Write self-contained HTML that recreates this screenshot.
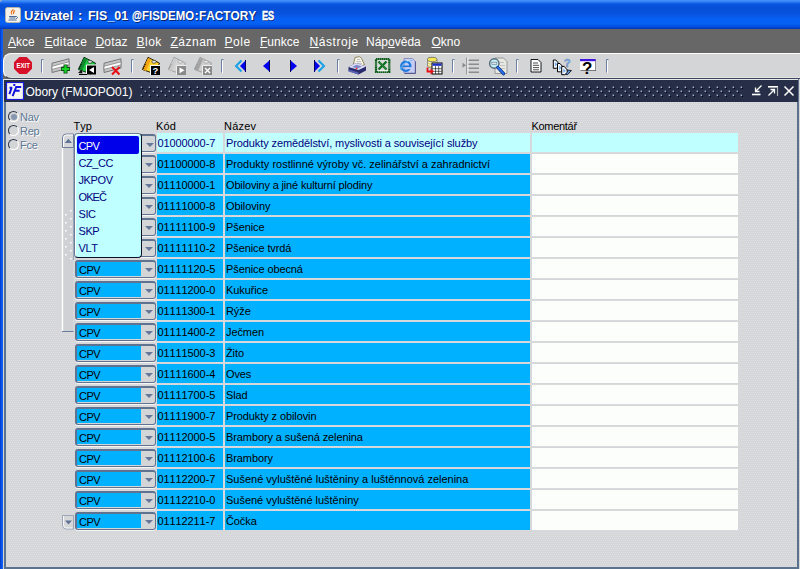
<!DOCTYPE html>
<html><head><meta charset="utf-8"><title>Obory</title>
<style>
*{box-sizing:border-box;margin:0;padding:0}
html,body{width:800px;height:569px;overflow:hidden}
body{font-family:"Liberation Sans",sans-serif;font-size:11px;font-kerning:none;background:#d5d6d8;position:relative;color:#000}
.abs{position:absolute}
#title{left:0;top:0;width:800px;height:29px;background:linear-gradient(#4a97f8 0,#2a7bf4 2px,#0a55e0 4px,#064fd6 8px,#0853de 14px,#0760f4 19px,#0660f4 24px,#034ad8 27px,#0238b4 29px)}
#title .txt{top:8px;transform-origin:0 0;color:#fff;font-weight:bold;font-size:13px;text-shadow:1px 1px 0 #0a246a;white-space:nowrap;line-height:16px}
#lborder{left:0;top:29px;width:3px;height:540px;background:linear-gradient(90deg,#0236c8,#0a56ea 50%,#1560f0)}
#menu{left:3px;top:29px;width:797px;height:24px;background:#676767;color:#fff;font-size:12px;white-space:nowrap}
#menu span{position:absolute;top:6px;line-height:14px}
#menu u{text-decoration:underline;text-underline-offset:1px}
#toolbg{left:3px;top:53px;width:797px;height:26px;background:#676767}
#tool{left:3px;top:53px;width:900px;height:26px;background:#d4d5d7;border-radius:8px 0 0 8px;border-top:1px solid #fff;border-left:1px solid #fff;border-bottom:1px solid #3c4660;box-shadow:inset 0 -1px 0 #e2e2e2}
#win{left:4px;top:79px;width:795px;height:490px;border:2px solid #5b728f;border-top:none;background-color:#d4d6d9}
#wtitle{left:4px;top:79px;width:794px;height:23px;background:#262f47;color:#fff;font-size:12px;border-top:1px solid #e8e8e8}
#wtitle .t{left:21.5px;top:5px;white-space:nowrap;line-height:14px;letter-spacing:-.03px}
.row{position:absolute;left:0;height:19px;width:800px}
.c{position:absolute;top:0;height:19px;background:#00b1ff;line-height:14px;padding:3px 0 0 1px;white-space:nowrap;overflow:hidden;letter-spacing:-.1px}
.first .c{background:#c0ffff;color:#000080}
.kod{left:157px;width:66px;padding-left:.5px}
.naz{left:225px;width:305px}
.kom{left:532px;width:206px;background:#fcfefc!important}
.first .kom{background:#c0ffff!important}
.combo{position:absolute;left:75px;top:1px;width:81px;height:18px;border:1px solid #5f7391;border-top-width:2px;border-left-width:2px;border-radius:3px;background:#d4d5d7;box-shadow:0 1px 0 #f6f6f6}
.combo span{position:absolute;left:0;top:0;width:64px;height:14px;background:#00b1ff;line-height:16px;padding-left:2px;letter-spacing:-.5px;overflow:hidden}
.combo i{position:absolute;left:67.5px;top:6px;border:4px solid transparent;border-top:4px solid #66789a;border-bottom:none}
.hdr{position:absolute;top:119px;font-size:11px;line-height:14px;letter-spacing:-.3px}
.radio{position:absolute;left:8px;width:11px;height:11px;border-radius:50%;border:1px solid #2c3548;border-right-color:#fff;border-bottom-color:#fff;background:#d4d5d7}
.radio b{position:absolute;left:2px;top:2px;width:6px;height:6px;border-radius:50%;background:#8797b0}
.rl{position:absolute;left:20px;color:#5d7896;text-shadow:1px 1px 0 #fff;line-height:14px;letter-spacing:-.25px}
.first .combo i{margin:1px 0 0 1px}
#pop{left:74px;top:133px;width:68px;height:125px;background:#c0ffff;border:1px solid #6a7c98;border-right:1px solid #0c1226;border-bottom:1px solid #0c1226;border-radius:4px;box-shadow:inset 1px 1px 0 #fff;color:#000080}
#pop div{position:absolute;left:2px;height:17px;width:62px;line-height:14px;padding:3px 0 0 1.5px;letter-spacing:-.4px}
#pop .sel{background:#0000ea;color:#fff;border-radius:2px;height:18px;top:2px;letter-spacing:-.7px}
</style></head><body>
<div id="title" class="abs">
<svg class="abs" style="left:5px;top:7px" width="16" height="16" viewBox="0 0 16 16"><rect x=".5" y=".5" width="15" height="15" rx="2" fill="#f4f2ea" stroke="#b8b4a8"/><path d="M8.5 2.5c-2 1.5-3 3-1.5 5M10 3.5c-1.5 1-2 2.2-1 3.5" stroke="#e8701a" stroke-width="1.2" fill="none"/><path d="M4 9.5h7M4.5 11h6M3.5 13h8" stroke="#4a6a9a" stroke-width="1"/><path d="M11 9.5c2 0 2 2 0 2" stroke="#4a6a9a" fill="none"/></svg>
<div class="txt abs" style="left:24px;transform:scaleX(1)">Uživatel</div><div class="txt abs" style="left:78px;transform:scaleX(1)">:</div><div class="txt abs" style="left:88px;transform:scaleX(0.96)">FIS_01</div><div class="txt abs" style="left:131.5px;transform:scaleX(0.78);-webkit-text-stroke:.3px #fff">@</div><div class="txt abs" style="left:141.5px;transform:scaleX(0.88)">FISDEMO</div><div class="txt abs" style="left:194.5px;transform:scaleX(1)">:</div><div class="txt abs" style="left:199px;transform:scaleX(0.91)">FACTORY</div><div class="txt abs" style="left:261.5px;transform:scaleX(0.7);-webkit-text-stroke:.5px #fff">ES</div></div>
<div id="lborder" class="abs"></div><div class="abs" style="left:0;top:0;width:2px;height:1px;background:#8ea8d4"></div><div class="abs" style="left:0;top:1px;width:1px;height:1px;background:#8ea8d4"></div>
<div id="menu" class="abs">
<span style="left:5px"><u>A</u>kce</span>
<span style="left:41.4px;letter-spacing:.4px"><u>E</u>ditace</span>
<span style="left:92.4px;letter-spacing:.2px"><u>D</u>otaz</span>
<span style="left:133.5px;letter-spacing:.5px"><u>B</u>lok</span>
<span style="left:167.5px;letter-spacing:.5px"><u>Z</u>áznam</span>
<span style="left:221.6px;letter-spacing:.5px"><u>P</u>ole</span>
<span style="left:257px"><u>F</u>unkce</span>
<span style="left:306.6px;letter-spacing:.55px"><u>N</u>ástroje</span>
<span style="left:363px">Náp<u>o</u>věda</span>
<span style="left:428.5px"><u>O</u>kno</span>
</div>
<div id="toolbg" class="abs"></div>
<div id="tool" class="abs"></div>
<svg class="abs" style="left:0;top:0" width="800" height="80" viewBox="0 0 800 80">
<polygon points="19.3,57 26.7,57 32,62.3 32,68.7 26.7,74 19.3,74 14,68.7 14,62.3" fill="#d70f28"/>
<text x="23.2" y="68" font-family="Liberation Sans" font-weight="bold" font-size="7.5" fill="#fff" text-anchor="middle" textLength="13.5" lengthAdjust="spacingAndGlyphs">EXIT</text>
<path d="M41.5 59.5v13M41.5 59.5h2" stroke="#6b80a4" fill="none"/><path d="M42.5 60.5v12.5" stroke="#fff" fill="none"/>
<path d="M131.5 59.5v13M131.5 59.5h2" stroke="#6b80a4" fill="none"/><path d="M132.5 60.5v12.5" stroke="#fff" fill="none"/>
<path d="M221.5 59.5v13M221.5 59.5h2" stroke="#6b80a4" fill="none"/><path d="M222.5 60.5v12.5" stroke="#fff" fill="none"/>
<path d="M337.5 59.5v13M337.5 59.5h2" stroke="#6b80a4" fill="none"/><path d="M338.5 60.5v12.5" stroke="#fff" fill="none"/>
<path d="M452.5 59.5v13M452.5 59.5h2" stroke="#6b80a4" fill="none"/><path d="M453.5 60.5v12.5" stroke="#fff" fill="none"/>
<path d="M516.5 59.5v13M516.5 59.5h2" stroke="#6b80a4" fill="none"/><path d="M517.5 60.5v12.5" stroke="#fff" fill="none"/>
<path d="M606.5 59.5v13M606.5 59.5h2" stroke="#6b80a4" fill="none"/><path d="M607.5 60.5v12.5" stroke="#fff" fill="none"/>
<polygon points="52,63.2 69,58.8 69,68 52,72.5" fill="#c6c6c6" stroke="#6e6e6e" stroke-width=".9"/><polygon points="52,66.3 69,61.8 69,64.9 52,69.4" fill="#fff" stroke="#777" stroke-width=".7"/>
<path d="M65.5 64.5v9M61 69h9" stroke="#0a4a10" stroke-width="4"/><path d="M65.5 65.2v7.6M61.7 69h7.6" stroke="#18d428" stroke-width="2.2"/>
<polygon points="84,57.3 95.5,63.2 91,74 78.5,69.5" fill="#22cc48" stroke="#06280c" stroke-width="1"/><polygon points="84,58 87,59.6 82,71 79,69.5" fill="#0e8a2c"/><path d="M81.2 64l-2.5 5.5" stroke="#06280c" stroke-width="1.6" stroke-dasharray="1 1"/><ellipse cx="90" cy="61.8" rx="2.2" ry="1.5" fill="#e4e4e4" stroke="#06280c" stroke-width=".6"/>
<path d="M78 73l3.5-3.5 1 4z" fill="#111"/>
<rect x="86.5" y="65" width="9.5" height="9.5" fill="#000" /><path d="M86.5 74.5v-9.5h9.5" stroke="#fff" fill="none"/><polygon points="89,70 94,67 94,73" fill="#fff"/><path d="M79 74.5h8" stroke="#000"/>
<polygon points="104,63.2 121,58.8 121,68 104,72.5" fill="#c6c6c6" stroke="#6e6e6e" stroke-width=".9"/><polygon points="104,66.3 121,61.8 121,64.9 104,69.4" fill="#fff" stroke="#777" stroke-width=".7"/>
<path d="M112 67l7.5 7.5M119.5 67l-7.5 7.5" stroke="#e80c14" stroke-width="2"/>
<polygon points="148,57.3 159.5,63.2 155,74 142.5,69.5" fill="#ffd632" stroke="#2a1c00" stroke-width="1"/><polygon points="148,58 151,59.6 146,71 143,69.5" fill="#f4a410"/><path d="M145.2 64l-2.5 5.5" stroke="#2a1c00" stroke-width="1.6" stroke-dasharray="1 1"/><ellipse cx="154" cy="61.8" rx="2.2" ry="1.5" fill="#e4e4e4" stroke="#2a1c00" stroke-width=".6"/>
<rect x="150.5" y="65.5" width="9.5" height="9.5" fill="#000"/><path d="M150.5 75v-9.5h9.5" stroke="#fff" fill="none"/><text x="155.5" y="74" font-family="Liberation Sans" font-weight="bold" font-size="9.5" fill="#fff" text-anchor="middle">?</text>
<polygon points="174,57.3 185.5,63.2 181,74 168.5,69.5" fill="#d6d6d6" stroke="#9a9a9a" stroke-width="0.9"/><polygon points="174,58 177,59.6 172,71 169,69.5" fill="#cccccc"/><path d="M171.2 64l-2.5 5.5" stroke="#9a9a9a" stroke-width="1.6" stroke-dasharray="1 1"/><ellipse cx="180" cy="61.8" rx="2.2" ry="1.5" fill="#e4e4e4" stroke="#9a9a9a" stroke-width=".6"/>
<rect x="176.5" y="65.5" width="9.5" height="9.5" fill="#8a8a8a"/><path d="M176.5 75v-9.5h9.5" stroke="#eee" fill="none"/><polygon points="179.5,67.5 184.5,70.3 179.5,73.2" fill="#fff"/>
<polygon points="200,57.3 211.5,63.2 207,74 194.5,69.5" fill="#cfcfcf" stroke="#969696" stroke-width="0.9"/><polygon points="200,58 203,59.6 198,71 195,69.5" fill="#a4a4a4"/><path d="M197.2 64l-2.5 5.5" stroke="#969696" stroke-width="1.6" stroke-dasharray="1 1"/><ellipse cx="206" cy="61.8" rx="2.2" ry="1.5" fill="#e4e4e4" stroke="#969696" stroke-width=".6"/>
<rect x="202.5" y="65.5" width="9.5" height="9.5" fill="#8a8a8a"/><path d="M202.5 75v-9.5h9.5" stroke="#eee" fill="none"/><path d="M205 68l5 5M210 68l-5 5" stroke="#fff" stroke-width="1.3"/>
<polygon points="246,60 246,72 240,66" fill="#0000f0"/><path d="M241.5 60.5l-5.5 5.5 5.5 5.5" stroke="#18a0e8" stroke-width="2" fill="none"/><path d="M245.5 60v12" stroke="#000060"/>
<polygon points="270,60 270,72 263,66" fill="#0000f0"/><path d="M269.5 60v12" stroke="#000060"/>
<polygon points="290,60 290,72 297,66" fill="#0000f0"/><path d="M290.5 60v12" stroke="#000060"/>
<polygon points="314,60 314,72 320,66" fill="#0000f0"/><path d="M318.5 60.5l5.5 5.5-5.5 5.5" stroke="#18a0e8" stroke-width="2" fill="none"/><path d="M314.5 60v12" stroke="#000060"/>
<path d="M353.5 64l1.5-6.5 4.5-.8 2 1.5 3 6.5-6 2z" fill="#f6f4e4" stroke="#7a7448" stroke-width=".8"/><path d="M357 59.5l3 .0M356.5 61.5l4.5 .3M357 63.3l5 .5" stroke="#a8a8b8" stroke-width=".7"/><polygon points="348.5,67 356,63 366,66.5 366,70.5 358.5,74.5 348.5,71" fill="#2a2c6c"/><polygon points="348.5,67 356,63 366,66.5 358.5,70" fill="#dcdff6"/><polygon points="352,67 356.5,64.8 362,66.5 357.8,68.5" fill="#8088c8"/><polygon points="348.5,69.5 358.5,72.5 358.5,74.5 348.5,71.5" fill="#5a64b4"/><circle cx="356.5" cy="68.6" r=".9" fill="#f02020"/>
<rect x="376" y="59" width="13.3" height="13" fill="#d8dad8" stroke="#0a5c18" stroke-width="2.2" stroke-dasharray="1.6 .35"/><path d="M377.5 70.8h10.5" stroke="#fff" stroke-width="1"/><path d="M378.5 61.5l8 8M386.5 61.5l-8 8" stroke="#0e6e20" stroke-width="2.3"/><path d="M379.5 62l6.5 7" stroke="#38a048" stroke-width=".8"/>
<polygon points="404,58.5 412.5,58.5 415.2,61 415.2,73 404,73" fill="#c6cdf2" stroke="#7a80b8" stroke-width=".8"/><path d="M404.5 73.5h11M415.5 61.5v12" stroke="#5a5a90" stroke-width="1"/><path d="M405 60.5h6" stroke="#f0f2ff" stroke-width="1.2"/><circle cx="405.8" cy="66.3" r="4.6" fill="none" stroke="#1c78e0" stroke-width="2.2"/><path d="M402 66.3h8" stroke="#1c78e0" stroke-width="1.6"/><path d="M408.2 68.2h4.5" stroke="#c6cdf2" stroke-width="2"/><path d="M400.2 70c1.5-5.5 7-9.5 12-9.5" stroke="#5cb8f4" stroke-width="1" fill="none"/>
<path d="M427.5 59.5v6.5c0 2.5 9.5 2.5 9.5 0v-6.5" fill="#f8f6d8" stroke="#666" stroke-width=".7"/><ellipse cx="432.2" cy="59.5" rx="4.7" ry="2.2" fill="#f4e650" stroke="#555" stroke-width=".7"/><path d="M428 62.5c0 2.2 8.5 2.2 8.5 0M428 65c0 2.2 8.5 2.2 8.5 0" stroke="#d4b420" fill="none" stroke-width=".9"/>
<rect x="432" y="63" width="10" height="11" fill="#fff" stroke="#000" stroke-width="1"/><rect x="432.5" y="63.5" width="9" height="2.3" fill="#1830c8"/><path d="M432.5 68.7h9M432.5 71.3h9M435.5 66v8M438.7 66v8" stroke="#000" stroke-width=".6"/><path d="M427.5 67.5v4h4" stroke="#e81018" stroke-width="1.8" fill="none"/><polygon points="430.5,68.5 434,71.5 430.5,74.5" fill="#e81018"/>
<path d="M467.8 57.5v17" stroke="#fff" stroke-width="1.2"/><path d="M466.7 57.5v17" stroke="#8e8e8e" stroke-width="1"/><path d="M468.5 60.3h10.5M468.5 64.3h10.5M468.5 68.3h10.5M468.5 72.3h10.5" stroke="#8c8c8c" stroke-width="1.5"/><polygon points="462.5,62.8 466,65.3 462.5,67.8" fill="#8a8a8a"/>
<polygon points="495,58 503.5,58 507,61.5 507,73.5 495,73.5" fill="#e8e8e2" stroke="#8e8e8e" stroke-width=".9"/><path d="M500 62.5h4M500 65.5h5M500 68.5h5" stroke="#b8b8b8" stroke-width=".8"/><circle cx="494.3" cy="63.5" r="4.7" fill="#bfeef4" stroke="#566878" stroke-width="1.4"/><rect x="491.8" y="62.2" width="5" height="2.3" fill="#dfe8ee" stroke="#6a7a8a" stroke-width=".6"/><path d="M497.8 67.5l5.8 6.2" stroke="#0c2a78" stroke-width="3.2" stroke-linecap="round"/><path d="M497.8 67.5l5.8 6.2" stroke="#2470ec" stroke-width="1.9" stroke-linecap="round"/>
<polygon points="531,59.5 538,59.5 541,62.5 541,72 531,72" fill="#fff" stroke="#000" stroke-width=".9"/><path d="M533 63h5M533 65.3h6M533 67.6h6M533 69.8h6" stroke="#222" stroke-width=".8"/>
<polygon points="562.5,73.5 567,70 571.5,70.5 567.5,74.7" fill="#5a94e0" stroke="#000" stroke-width=".8"/><polygon points="553.3,60 555.8,60 558.8,63.5 558.8,66 556.3,68.3 553.3,68.3" fill="#f4f8ff" stroke="#000" stroke-width="1"/><polygon points="554.9,62 557.5999999999999,64.3 554.9,66.6" fill="#7ab0ec"/><polygon points="557.5,63.5 560,63.5 563,67 563,69.5 560.5,71.8 557.5,71.8" fill="#f4f8ff" stroke="#000" stroke-width="1"/><polygon points="559.1,65.5 561.8,67.8 559.1,70.1" fill="#7ab0ec"/><polygon points="561.7,66.4 564.2,66.4 567.2,69.9 567.2,72.4 564.7,74.7 561.7,74.7" fill="#f4f8ff" stroke="#000" stroke-width="1"/><polygon points="563.3000000000001,68.4 566,70.7 563.3000000000001,73" fill="#7ab0ec"/><text x="567.2" y="66.5" font-family="Liberation Sans" font-weight="bold" font-size="11.5" fill="#78b4f4" text-anchor="middle" stroke="#6a7a9a" stroke-width=".35">?</text>
<rect x="580.5" y="59" width="15.5" height="11.7" fill="#222"/><rect x="580" y="59" width="15.5" height="11.2" fill="#fff"/><rect x="580" y="59" width="15.5" height="2.2" fill="#4214e0"/><text x="587.3" y="74" font-family="Liberation Sans" font-weight="bold" font-size="17" fill="#000" text-anchor="middle">?</text>
</svg>
<div id="win" class="abs"><svg class="abs" style="left:0;top:23px" width="791" height="465"><defs><pattern id="dp" width="2" height="4" patternUnits="userSpaceOnUse"><path d="M0 0h1v1h-1zM1 2h1v1h-1z" fill="#dedede"/></pattern></defs><rect width="791" height="465" fill="url(#dp)" shape-rendering="crispEdges"/></svg></div>
<div id="wtitle" class="abs">
<svg class="abs" style="left:2px;top:2px" width="18" height="18" viewBox="0 0 18 18"><rect x=".5" y=".5" width="17" height="17" fill="#f6f6f2" stroke="#1a1ad8" stroke-width="1.2"/><path d="M7.3 3h2M3.5 5.8h2.8M5.6 5.8L3.4 12.2M9.4 5h5.8M10.2 5L6.6 14.2M8.6 8.7h5" stroke="#1212e0" stroke-width="2" fill="none"/></svg>
<div class="t abs">Obory (FMJOPO01)</div>
<svg class="abs" style="left:0;top:-1px" width="794" height="23" viewBox="4 79 794 23">
<path d="M140.6 86.6h1.4v1.4h-1.4zM140.6 94.6h1.4v1.4h-1.4zM148.6 86.6h1.4v1.4h-1.4zM148.6 94.6h1.4v1.4h-1.4zM156.6 86.6h1.4v1.4h-1.4zM156.6 94.6h1.4v1.4h-1.4zM164.6 86.6h1.4v1.4h-1.4zM164.6 94.6h1.4v1.4h-1.4zM172.6 86.6h1.4v1.4h-1.4zM172.6 94.6h1.4v1.4h-1.4zM180.6 86.6h1.4v1.4h-1.4zM180.6 94.6h1.4v1.4h-1.4zM188.6 86.6h1.4v1.4h-1.4zM188.6 94.6h1.4v1.4h-1.4zM196.6 86.6h1.4v1.4h-1.4zM196.6 94.6h1.4v1.4h-1.4zM204.6 86.6h1.4v1.4h-1.4zM204.6 94.6h1.4v1.4h-1.4zM212.6 86.6h1.4v1.4h-1.4zM212.6 94.6h1.4v1.4h-1.4zM220.6 86.6h1.4v1.4h-1.4zM220.6 94.6h1.4v1.4h-1.4zM228.6 86.6h1.4v1.4h-1.4zM228.6 94.6h1.4v1.4h-1.4zM236.6 86.6h1.4v1.4h-1.4zM236.6 94.6h1.4v1.4h-1.4zM244.6 86.6h1.4v1.4h-1.4zM244.6 94.6h1.4v1.4h-1.4zM252.6 86.6h1.4v1.4h-1.4zM252.6 94.6h1.4v1.4h-1.4zM260.6 86.6h1.4v1.4h-1.4zM260.6 94.6h1.4v1.4h-1.4zM268.6 86.6h1.4v1.4h-1.4zM268.6 94.6h1.4v1.4h-1.4zM276.6 86.6h1.4v1.4h-1.4zM276.6 94.6h1.4v1.4h-1.4zM284.6 86.6h1.4v1.4h-1.4zM284.6 94.6h1.4v1.4h-1.4zM292.6 86.6h1.4v1.4h-1.4zM292.6 94.6h1.4v1.4h-1.4zM300.6 86.6h1.4v1.4h-1.4zM300.6 94.6h1.4v1.4h-1.4zM308.6 86.6h1.4v1.4h-1.4zM308.6 94.6h1.4v1.4h-1.4zM316.6 86.6h1.4v1.4h-1.4zM316.6 94.6h1.4v1.4h-1.4zM324.6 86.6h1.4v1.4h-1.4zM324.6 94.6h1.4v1.4h-1.4zM332.6 86.6h1.4v1.4h-1.4zM332.6 94.6h1.4v1.4h-1.4zM340.6 86.6h1.4v1.4h-1.4zM340.6 94.6h1.4v1.4h-1.4zM348.6 86.6h1.4v1.4h-1.4zM348.6 94.6h1.4v1.4h-1.4zM356.6 86.6h1.4v1.4h-1.4zM356.6 94.6h1.4v1.4h-1.4zM364.6 86.6h1.4v1.4h-1.4zM364.6 94.6h1.4v1.4h-1.4zM372.6 86.6h1.4v1.4h-1.4zM372.6 94.6h1.4v1.4h-1.4zM380.6 86.6h1.4v1.4h-1.4zM380.6 94.6h1.4v1.4h-1.4zM388.6 86.6h1.4v1.4h-1.4zM388.6 94.6h1.4v1.4h-1.4zM396.6 86.6h1.4v1.4h-1.4zM396.6 94.6h1.4v1.4h-1.4zM404.6 86.6h1.4v1.4h-1.4zM404.6 94.6h1.4v1.4h-1.4zM412.6 86.6h1.4v1.4h-1.4zM412.6 94.6h1.4v1.4h-1.4zM420.6 86.6h1.4v1.4h-1.4zM420.6 94.6h1.4v1.4h-1.4zM428.6 86.6h1.4v1.4h-1.4zM428.6 94.6h1.4v1.4h-1.4zM436.6 86.6h1.4v1.4h-1.4zM436.6 94.6h1.4v1.4h-1.4zM444.6 86.6h1.4v1.4h-1.4zM444.6 94.6h1.4v1.4h-1.4zM452.6 86.6h1.4v1.4h-1.4zM452.6 94.6h1.4v1.4h-1.4zM460.6 86.6h1.4v1.4h-1.4zM460.6 94.6h1.4v1.4h-1.4zM468.6 86.6h1.4v1.4h-1.4zM468.6 94.6h1.4v1.4h-1.4zM476.6 86.6h1.4v1.4h-1.4zM476.6 94.6h1.4v1.4h-1.4zM484.6 86.6h1.4v1.4h-1.4zM484.6 94.6h1.4v1.4h-1.4zM492.6 86.6h1.4v1.4h-1.4zM492.6 94.6h1.4v1.4h-1.4zM500.6 86.6h1.4v1.4h-1.4zM500.6 94.6h1.4v1.4h-1.4zM508.6 86.6h1.4v1.4h-1.4zM508.6 94.6h1.4v1.4h-1.4zM516.6 86.6h1.4v1.4h-1.4zM516.6 94.6h1.4v1.4h-1.4zM524.6 86.6h1.4v1.4h-1.4zM524.6 94.6h1.4v1.4h-1.4zM532.6 86.6h1.4v1.4h-1.4zM532.6 94.6h1.4v1.4h-1.4zM540.6 86.6h1.4v1.4h-1.4zM540.6 94.6h1.4v1.4h-1.4zM548.6 86.6h1.4v1.4h-1.4zM548.6 94.6h1.4v1.4h-1.4zM556.6 86.6h1.4v1.4h-1.4zM556.6 94.6h1.4v1.4h-1.4zM564.6 86.6h1.4v1.4h-1.4zM564.6 94.6h1.4v1.4h-1.4zM572.6 86.6h1.4v1.4h-1.4zM572.6 94.6h1.4v1.4h-1.4zM580.6 86.6h1.4v1.4h-1.4zM580.6 94.6h1.4v1.4h-1.4zM588.6 86.6h1.4v1.4h-1.4zM588.6 94.6h1.4v1.4h-1.4zM596.6 86.6h1.4v1.4h-1.4zM596.6 94.6h1.4v1.4h-1.4zM604.6 86.6h1.4v1.4h-1.4zM604.6 94.6h1.4v1.4h-1.4zM612.6 86.6h1.4v1.4h-1.4zM612.6 94.6h1.4v1.4h-1.4zM620.6 86.6h1.4v1.4h-1.4zM620.6 94.6h1.4v1.4h-1.4zM628.6 86.6h1.4v1.4h-1.4zM628.6 94.6h1.4v1.4h-1.4zM636.6 86.6h1.4v1.4h-1.4zM636.6 94.6h1.4v1.4h-1.4zM644.6 86.6h1.4v1.4h-1.4zM644.6 94.6h1.4v1.4h-1.4zM652.6 86.6h1.4v1.4h-1.4zM652.6 94.6h1.4v1.4h-1.4zM660.6 86.6h1.4v1.4h-1.4zM660.6 94.6h1.4v1.4h-1.4zM668.6 86.6h1.4v1.4h-1.4zM668.6 94.6h1.4v1.4h-1.4zM676.6 86.6h1.4v1.4h-1.4zM676.6 94.6h1.4v1.4h-1.4zM684.6 86.6h1.4v1.4h-1.4zM684.6 94.6h1.4v1.4h-1.4zM692.6 86.6h1.4v1.4h-1.4zM692.6 94.6h1.4v1.4h-1.4zM700.6 86.6h1.4v1.4h-1.4zM700.6 94.6h1.4v1.4h-1.4zM708.6 86.6h1.4v1.4h-1.4zM708.6 94.6h1.4v1.4h-1.4zM716.6 86.6h1.4v1.4h-1.4zM716.6 94.6h1.4v1.4h-1.4zM724.6 86.6h1.4v1.4h-1.4zM724.6 94.6h1.4v1.4h-1.4zM732.6 86.6h1.4v1.4h-1.4zM732.6 94.6h1.4v1.4h-1.4zM740.6 86.6h1.4v1.4h-1.4zM740.6 94.6h1.4v1.4h-1.4zM144.6 90.6h1.4v1.4h-1.4zM152.6 90.6h1.4v1.4h-1.4zM160.6 90.6h1.4v1.4h-1.4zM168.6 90.6h1.4v1.4h-1.4zM176.6 90.6h1.4v1.4h-1.4zM184.6 90.6h1.4v1.4h-1.4zM192.6 90.6h1.4v1.4h-1.4zM200.6 90.6h1.4v1.4h-1.4zM208.6 90.6h1.4v1.4h-1.4zM216.6 90.6h1.4v1.4h-1.4zM224.6 90.6h1.4v1.4h-1.4zM232.6 90.6h1.4v1.4h-1.4zM240.6 90.6h1.4v1.4h-1.4zM248.6 90.6h1.4v1.4h-1.4zM256.6 90.6h1.4v1.4h-1.4zM264.6 90.6h1.4v1.4h-1.4zM272.6 90.6h1.4v1.4h-1.4zM280.6 90.6h1.4v1.4h-1.4zM288.6 90.6h1.4v1.4h-1.4zM296.6 90.6h1.4v1.4h-1.4zM304.6 90.6h1.4v1.4h-1.4zM312.6 90.6h1.4v1.4h-1.4zM320.6 90.6h1.4v1.4h-1.4zM328.6 90.6h1.4v1.4h-1.4zM336.6 90.6h1.4v1.4h-1.4zM344.6 90.6h1.4v1.4h-1.4zM352.6 90.6h1.4v1.4h-1.4zM360.6 90.6h1.4v1.4h-1.4zM368.6 90.6h1.4v1.4h-1.4zM376.6 90.6h1.4v1.4h-1.4zM384.6 90.6h1.4v1.4h-1.4zM392.6 90.6h1.4v1.4h-1.4zM400.6 90.6h1.4v1.4h-1.4zM408.6 90.6h1.4v1.4h-1.4zM416.6 90.6h1.4v1.4h-1.4zM424.6 90.6h1.4v1.4h-1.4zM432.6 90.6h1.4v1.4h-1.4zM440.6 90.6h1.4v1.4h-1.4zM448.6 90.6h1.4v1.4h-1.4zM456.6 90.6h1.4v1.4h-1.4zM464.6 90.6h1.4v1.4h-1.4zM472.6 90.6h1.4v1.4h-1.4zM480.6 90.6h1.4v1.4h-1.4zM488.6 90.6h1.4v1.4h-1.4zM496.6 90.6h1.4v1.4h-1.4zM504.6 90.6h1.4v1.4h-1.4zM512.6 90.6h1.4v1.4h-1.4zM520.6 90.6h1.4v1.4h-1.4zM528.6 90.6h1.4v1.4h-1.4zM536.6 90.6h1.4v1.4h-1.4zM544.6 90.6h1.4v1.4h-1.4zM552.6 90.6h1.4v1.4h-1.4zM560.6 90.6h1.4v1.4h-1.4zM568.6 90.6h1.4v1.4h-1.4zM576.6 90.6h1.4v1.4h-1.4zM584.6 90.6h1.4v1.4h-1.4zM592.6 90.6h1.4v1.4h-1.4zM600.6 90.6h1.4v1.4h-1.4zM608.6 90.6h1.4v1.4h-1.4zM616.6 90.6h1.4v1.4h-1.4zM624.6 90.6h1.4v1.4h-1.4zM632.6 90.6h1.4v1.4h-1.4zM640.6 90.6h1.4v1.4h-1.4zM648.6 90.6h1.4v1.4h-1.4zM656.6 90.6h1.4v1.4h-1.4zM664.6 90.6h1.4v1.4h-1.4zM672.6 90.6h1.4v1.4h-1.4zM680.6 90.6h1.4v1.4h-1.4zM688.6 90.6h1.4v1.4h-1.4zM696.6 90.6h1.4v1.4h-1.4zM704.6 90.6h1.4v1.4h-1.4zM712.6 90.6h1.4v1.4h-1.4zM720.6 90.6h1.4v1.4h-1.4zM728.6 90.6h1.4v1.4h-1.4zM736.6 90.6h1.4v1.4h-1.4z" fill="#9ab0c6"/><path d="M142 88h1v1h-1zM142 96h1v1h-1zM150 88h1v1h-1zM150 96h1v1h-1zM158 88h1v1h-1zM158 96h1v1h-1zM166 88h1v1h-1zM166 96h1v1h-1zM174 88h1v1h-1zM174 96h1v1h-1zM182 88h1v1h-1zM182 96h1v1h-1zM190 88h1v1h-1zM190 96h1v1h-1zM198 88h1v1h-1zM198 96h1v1h-1zM206 88h1v1h-1zM206 96h1v1h-1zM214 88h1v1h-1zM214 96h1v1h-1zM222 88h1v1h-1zM222 96h1v1h-1zM230 88h1v1h-1zM230 96h1v1h-1zM238 88h1v1h-1zM238 96h1v1h-1zM246 88h1v1h-1zM246 96h1v1h-1zM254 88h1v1h-1zM254 96h1v1h-1zM262 88h1v1h-1zM262 96h1v1h-1zM270 88h1v1h-1zM270 96h1v1h-1zM278 88h1v1h-1zM278 96h1v1h-1zM286 88h1v1h-1zM286 96h1v1h-1zM294 88h1v1h-1zM294 96h1v1h-1zM302 88h1v1h-1zM302 96h1v1h-1zM310 88h1v1h-1zM310 96h1v1h-1zM318 88h1v1h-1zM318 96h1v1h-1zM326 88h1v1h-1zM326 96h1v1h-1zM334 88h1v1h-1zM334 96h1v1h-1zM342 88h1v1h-1zM342 96h1v1h-1zM350 88h1v1h-1zM350 96h1v1h-1zM358 88h1v1h-1zM358 96h1v1h-1zM366 88h1v1h-1zM366 96h1v1h-1zM374 88h1v1h-1zM374 96h1v1h-1zM382 88h1v1h-1zM382 96h1v1h-1zM390 88h1v1h-1zM390 96h1v1h-1zM398 88h1v1h-1zM398 96h1v1h-1zM406 88h1v1h-1zM406 96h1v1h-1zM414 88h1v1h-1zM414 96h1v1h-1zM422 88h1v1h-1zM422 96h1v1h-1zM430 88h1v1h-1zM430 96h1v1h-1zM438 88h1v1h-1zM438 96h1v1h-1zM446 88h1v1h-1zM446 96h1v1h-1zM454 88h1v1h-1zM454 96h1v1h-1zM462 88h1v1h-1zM462 96h1v1h-1zM470 88h1v1h-1zM470 96h1v1h-1zM478 88h1v1h-1zM478 96h1v1h-1zM486 88h1v1h-1zM486 96h1v1h-1zM494 88h1v1h-1zM494 96h1v1h-1zM502 88h1v1h-1zM502 96h1v1h-1zM510 88h1v1h-1zM510 96h1v1h-1zM518 88h1v1h-1zM518 96h1v1h-1zM526 88h1v1h-1zM526 96h1v1h-1zM534 88h1v1h-1zM534 96h1v1h-1zM542 88h1v1h-1zM542 96h1v1h-1zM550 88h1v1h-1zM550 96h1v1h-1zM558 88h1v1h-1zM558 96h1v1h-1zM566 88h1v1h-1zM566 96h1v1h-1zM574 88h1v1h-1zM574 96h1v1h-1zM582 88h1v1h-1zM582 96h1v1h-1zM590 88h1v1h-1zM590 96h1v1h-1zM598 88h1v1h-1zM598 96h1v1h-1zM606 88h1v1h-1zM606 96h1v1h-1zM614 88h1v1h-1zM614 96h1v1h-1zM622 88h1v1h-1zM622 96h1v1h-1zM630 88h1v1h-1zM630 96h1v1h-1zM638 88h1v1h-1zM638 96h1v1h-1zM646 88h1v1h-1zM646 96h1v1h-1zM654 88h1v1h-1zM654 96h1v1h-1zM662 88h1v1h-1zM662 96h1v1h-1zM670 88h1v1h-1zM670 96h1v1h-1zM678 88h1v1h-1zM678 96h1v1h-1zM686 88h1v1h-1zM686 96h1v1h-1zM694 88h1v1h-1zM694 96h1v1h-1zM702 88h1v1h-1zM702 96h1v1h-1zM710 88h1v1h-1zM710 96h1v1h-1zM718 88h1v1h-1zM718 96h1v1h-1zM726 88h1v1h-1zM726 96h1v1h-1zM734 88h1v1h-1zM734 96h1v1h-1zM742 88h1v1h-1zM742 96h1v1h-1zM146 92h1v1h-1zM154 92h1v1h-1zM162 92h1v1h-1zM170 92h1v1h-1zM178 92h1v1h-1zM186 92h1v1h-1zM194 92h1v1h-1zM202 92h1v1h-1zM210 92h1v1h-1zM218 92h1v1h-1zM226 92h1v1h-1zM234 92h1v1h-1zM242 92h1v1h-1zM250 92h1v1h-1zM258 92h1v1h-1zM266 92h1v1h-1zM274 92h1v1h-1zM282 92h1v1h-1zM290 92h1v1h-1zM298 92h1v1h-1zM306 92h1v1h-1zM314 92h1v1h-1zM322 92h1v1h-1zM330 92h1v1h-1zM338 92h1v1h-1zM346 92h1v1h-1zM354 92h1v1h-1zM362 92h1v1h-1zM370 92h1v1h-1zM378 92h1v1h-1zM386 92h1v1h-1zM394 92h1v1h-1zM402 92h1v1h-1zM410 92h1v1h-1zM418 92h1v1h-1zM426 92h1v1h-1zM434 92h1v1h-1zM442 92h1v1h-1zM450 92h1v1h-1zM458 92h1v1h-1zM466 92h1v1h-1zM474 92h1v1h-1zM482 92h1v1h-1zM490 92h1v1h-1zM498 92h1v1h-1zM506 92h1v1h-1zM514 92h1v1h-1zM522 92h1v1h-1zM530 92h1v1h-1zM538 92h1v1h-1zM546 92h1v1h-1zM554 92h1v1h-1zM562 92h1v1h-1zM570 92h1v1h-1zM578 92h1v1h-1zM586 92h1v1h-1zM594 92h1v1h-1zM602 92h1v1h-1zM610 92h1v1h-1zM618 92h1v1h-1zM626 92h1v1h-1zM634 92h1v1h-1zM642 92h1v1h-1zM650 92h1v1h-1zM658 92h1v1h-1zM666 92h1v1h-1zM674 92h1v1h-1zM682 92h1v1h-1zM690 92h1v1h-1zM698 92h1v1h-1zM706 92h1v1h-1zM714 92h1v1h-1zM722 92h1v1h-1zM730 92h1v1h-1zM738 92h1v1h-1z" fill="#000" shape-rendering="crispEdges"/>
</svg>
<svg class="abs" style="left:0;top:-1px" width="794" height="23" viewBox="4 79 794 23">
<path d="M752 94.5h8.5" stroke="#fff" stroke-width="1.6"/><path d="M761.5 85.5l-5.5 5.5M755.5 87.5v4h4" stroke="#fff" stroke-width="1.3" fill="none"/>
<path d="M768 86.8h10" stroke="#fff" stroke-width="1.6"/><path d="M777.5 87v9" stroke="#b0b0b0" stroke-width="1.2"/><path d="M768.5 95.5l5.5-5.5M770.5 89.5h4v4" stroke="#fff" stroke-width="1.3" fill="none"/>
<path d="M784.5 86.5l9 9M793.5 86.5l-9 9" stroke="#fff" stroke-width="1.5"/>
</svg>
</div>
<div class="radio" style="top:111px"><b></b></div><div class="rl" style="top:110px">Nav</div>
<div class="radio" style="top:125px"></div><div class="rl" style="top:124px">Rep</div>
<div class="radio" style="top:139px"></div><div class="rl" style="top:138px">Fce</div>
<div class="hdr" style="left:73.5px;letter-spacing:0">Typ</div>
<div class="hdr" style="left:156px;letter-spacing:.2px">Kód</div>
<div class="hdr" style="left:224px;letter-spacing:.2px">Název</div>
<div class="hdr" style="left:531.5px">Komentář</div>
<svg class="abs" style="left:0;top:0" width="100" height="569" viewBox="0 0 100 569">
<path d="M62.5 147.5v-9.5q0-4 4-4h7v13.5z" fill="#d6d7d9" stroke="#6a7c9a"/><path d="M63.5 147v-9q0-3 3-3h6.5" stroke="#fff" fill="none"/><polygon points="64.8,143 72,143 68.4,138.8" fill="#5f7396"/>
<rect x="63" y="148" width="10" height="183" fill="#d0d1d4"/><path d="M62.5 148v183" stroke="#fff" stroke-width="1.4"/><path d="M62 331.5h11.5" stroke="#6a7c9a"/><path d="M73.5 148v112" stroke="#8a98b0" stroke-width=".8"/>
<path d="M70 210h1.6v1.6h-1.6zM70 218h1.6v1.6h-1.6zM70 226h1.6v1.6h-1.6zM70 234h1.6v1.6h-1.6zM70 242h1.6v1.6h-1.6zM70 250h1.6v1.6h-1.6zM70 258h1.6v1.6h-1.6zM65 214h1.6v1.6h-1.6zM65 222h1.6v1.6h-1.6zM65 230h1.6v1.6h-1.6zM65 238h1.6v1.6h-1.6zM65 246h1.6v1.6h-1.6zM65 254h1.6v1.6h-1.6z" fill="#fff"/>
<path d="M62.5 515.5v9.5q0 4 4 4h7v-13.5z" fill="#d6d7d9" stroke="#8a98b0" stroke-width=".8"/><path d="M63.5 516v9q0 3 3 3h6" stroke="#fff" fill="none" stroke-width=".8"/><polygon points="65,520.5 72,520.5 68.5,524.5" fill="#5f7396"/>
</svg>
<div class="row first" style="top:133px"><div class="combo"><span>CPV</span><i></i></div><div class="c kod">01000000-7</div><div class="c naz">Produkty zemědělství, myslivosti a související služby</div><div class="c kom"></div></div>
<div class="row" style="top:154px"><div class="combo"><span>CPV</span><i></i></div><div class="c kod">01100000-8</div><div class="c naz" style="letter-spacing:-.01px">Produkty rostlinné výroby vč. zelinářství a zahradnictví</div><div class="c kom"></div></div>
<div class="row" style="top:175px"><div class="combo"><span>CPV</span><i></i></div><div class="c kod">01110000-1</div><div class="c naz" style="letter-spacing:-.16px">Obiloviny a jiné kulturní plodiny</div><div class="c kom"></div></div>
<div class="row" style="top:196px"><div class="combo"><span>CPV</span><i></i></div><div class="c kod">01111000-8</div><div class="c naz">Obiloviny</div><div class="c kom"></div></div>
<div class="row" style="top:217px"><div class="combo"><span>CPV</span><i></i></div><div class="c kod">01111100-9</div><div class="c naz">Pšenice</div><div class="c kom"></div></div>
<div class="row" style="top:238px"><div class="combo"><span>CPV</span><i></i></div><div class="c kod">01111110-2</div><div class="c naz">Pšenice tvrdá</div><div class="c kom"></div></div>
<div class="row" style="top:259px"><div class="combo"><span>CPV</span><i></i></div><div class="c kod">01111120-5</div><div class="c naz">Pšenice obecná</div><div class="c kom"></div></div>
<div class="row" style="top:280px"><div class="combo"><span>CPV</span><i></i></div><div class="c kod">01111200-0</div><div class="c naz">Kukuřice</div><div class="c kom"></div></div>
<div class="row" style="top:301px"><div class="combo"><span>CPV</span><i></i></div><div class="c kod">01111300-1</div><div class="c naz">Rýže</div><div class="c kom"></div></div>
<div class="row" style="top:322px"><div class="combo"><span>CPV</span><i></i></div><div class="c kod">01111400-2</div><div class="c naz">Ječmen</div><div class="c kom"></div></div>
<div class="row" style="top:343px"><div class="combo"><span>CPV</span><i></i></div><div class="c kod">01111500-3</div><div class="c naz">Žito</div><div class="c kom"></div></div>
<div class="row" style="top:364px"><div class="combo"><span>CPV</span><i></i></div><div class="c kod">01111600-4</div><div class="c naz">Oves</div><div class="c kom"></div></div>
<div class="row" style="top:385px"><div class="combo"><span>CPV</span><i></i></div><div class="c kod">01111700-5</div><div class="c naz">Slad</div><div class="c kom"></div></div>
<div class="row" style="top:406px"><div class="combo"><span>CPV</span><i></i></div><div class="c kod">01111900-7</div><div class="c naz">Produkty z obilovin</div><div class="c kom"></div></div>
<div class="row" style="top:427px"><div class="combo"><span>CPV</span><i></i></div><div class="c kod">01112000-5</div><div class="c naz">Brambory a sušená zelenina</div><div class="c kom"></div></div>
<div class="row" style="top:448px"><div class="combo"><span>CPV</span><i></i></div><div class="c kod">01112100-6</div><div class="c naz">Brambory</div><div class="c kom"></div></div>
<div class="row" style="top:469px"><div class="combo"><span>CPV</span><i></i></div><div class="c kod">01112200-7</div><div class="c naz" style="letter-spacing:-.01px">Sušené vyluštěné luštěniny a luštěnnová zelenina</div><div class="c kom"></div></div>
<div class="row" style="top:490px"><div class="combo"><span>CPV</span><i></i></div><div class="c kod">01112210-0</div><div class="c naz" style="letter-spacing:-.02px">Sušené vyluštěné luštěniny</div><div class="c kom"></div></div>
<div class="row" style="top:511px"><div class="combo"><span>CPV</span><i></i></div><div class="c kod">01112211-7</div><div class="c naz">Čočka</div><div class="c kom"></div></div>
<div id="pop" class="abs">
<div class="sel">CPV</div>
<div style="top:19px">CZ_CC</div>
<div style="top:36px">JKPOV</div>
<div style="top:53px;letter-spacing:-.9px">OKEČ</div>
<div style="top:70px">SIC</div>
<div style="top:87px">SKP</div>
<div style="top:104px">VLT</div>
</div>
</body></html>
